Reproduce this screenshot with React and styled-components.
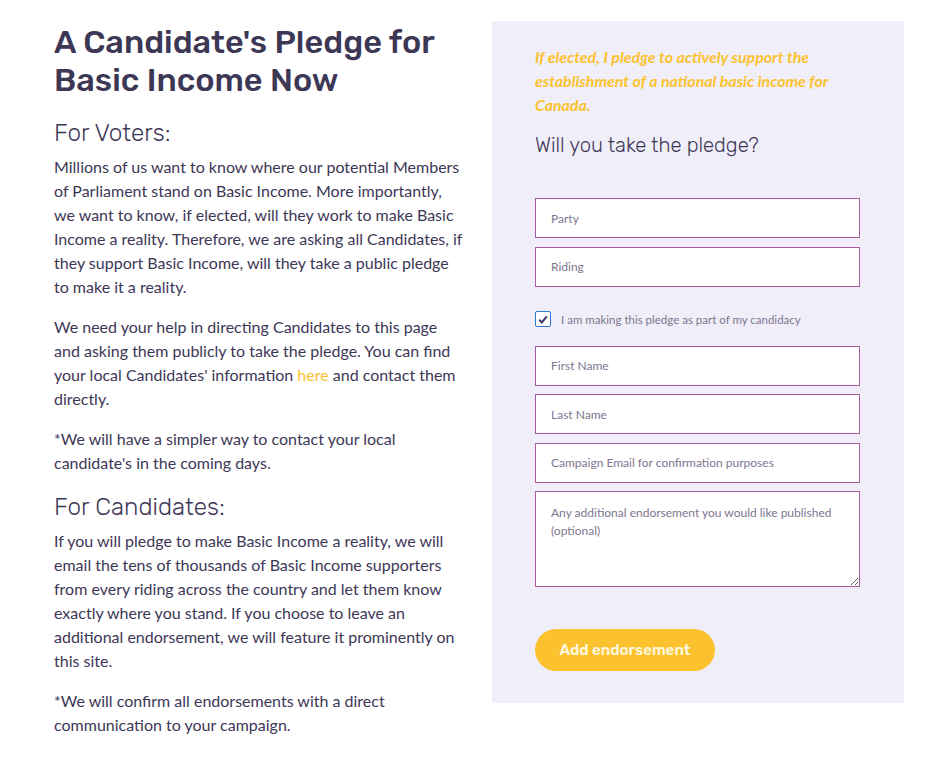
import React from 'react';
import styled, { createGlobalStyle } from 'styled-components';

const palette = {
  ink: '#3d3756',
  yellow: '#fcc22e',
  panel: '#f0eef9',
  border: '#a65ba3',
  hint: '#7d7690',
};

const Global = createGlobalStyle`
  html, body { margin: 0; padding: 0; background: #fff; }
  body { font-family: Lato, "Open Sans", sans-serif; color: ${palette.ink}; }
  * { box-sizing: border-box; }
`;

const Page = styled.div`
  display: flex;
  align-items: flex-start;
  gap: 27px;
  padding: 21px 40px 0 54px;
  width: 944px;
`;

const Story = styled.div`
  width: 411px;
  flex-shrink: 0;
`;

const Title = styled.h1`
  font-family: Rubik, Inter, "Noto Sans", sans-serif;
  font-weight: 500;
  font-size: 32.5px;
  line-height: 38px;
  margin: 2px 0 0;
`;

const SubHead = styled.h2`
  font-family: Rubik, Inter, "Noto Sans", sans-serif;
  font-weight: 300;
  font-size: 24.3px;
  line-height: 32px;
  margin: ${(p) => p.$top || 0}px 0 6px;
`;

const Para = styled.p`
  font-size: 16px;
  line-height: 24px;
  margin: 0 0 16px;
  a { color: ${palette.yellow}; text-decoration: none; }
`;

const Panel = styled.div`
  width: 412px;
  background: ${palette.panel};
  padding: 24px 43px 32px;
`;

const Pledge = styled.p`
  margin: 0;
  color: ${palette.yellow};
  font-weight: 700;
  font-style: italic;
  font-size: 15.9px;
  line-height: 24px;
`;

const Ask = styled.h3`
  font-family: Rubik, Inter, "Noto Sans", sans-serif;
  font-weight: 300;
  font-size: 20.3px;
  line-height: 28px;
  margin: 14px 0 39px;
`;

const Form = styled.form`
  display: flex;
  flex-direction: column;
  gap: 8.5px;
`;

const Field = styled.input`
  display: block;
  width: 325px;
  height: 40px;
  border: 1px solid ${palette.border};
  background: #fff;
  padding: 0 15px;
  font-family: Lato, sans-serif;
  font-size: 12px;
  color: ${palette.ink};
  outline: none;
  &::placeholder { color: ${palette.hint}; }
`;

const Area = styled.textarea`
  display: block;
  width: 325px;
  height: 96px;
  border: 1px solid ${palette.border};
  background: #fff;
  padding: 12px 15px;
  font-family: Lato, sans-serif;
  font-size: 12px;
  line-height: 18px;
  resize: vertical;
  outline: none;
  &::placeholder { color: ${palette.hint}; }
`;

const CheckRow = styled.label`
  display: flex;
  align-items: center;
  gap: 10px;
  margin: 16px 0 10px;
  font-size: 11.5px;
  color: ${palette.hint};
`;

const Box = styled.span`
  width: 16px;
  height: 16px;
  border: 1px solid #2b7bd6;
  border-radius: 2px;
  background: #fff;
  display: flex;
  align-items: center;
  justify-content: center;
`;

const Button = styled.button`
  margin-top: 33.5px;
  width: 180px;
  height: 42px;
  border: 0;
  border-radius: 21px;
  background: ${palette.yellow};
  color: #fff7dc;
  font-family: Rubik, Inter, "Noto Sans", sans-serif;
  font-weight: 600;
  font-size: 15px;
  cursor: pointer;
`;

export default function App() {
  return (
    <>
      <Global />
      <Page>
        <Story>
          <Title>A Candidate's Pledge for Basic Income Now</Title>
          <SubHead $top={18}>For Voters:</SubHead>
          <Para>
            Millions of us want to know where our potential Members of Parliament stand on
            Basic Income. More importantly, we want to know, if elected, will they work to make
            Basic Income a reality. Therefore, we are asking all Candidates, if they support
            Basic Income, will they take a public pledge to make it a reality.
          </Para>
          <Para>
            We need your help in directing Candidates to this page and asking them publicly to
            take the pledge. You can find your local Candidates' information <a href="#">here</a> and
            contact them directly.
          </Para>
          <Para>
            *We will have a simpler way to contact your local candidate's in the coming days.
          </Para>
          <SubHead>For Candidates:</SubHead>
          <Para>
            If you will pledge to make Basic Income a reality, we will email the tens of
            thousands of Basic Income supporters from every riding across the country and let
            them know exactly where you stand. If you choose to leave an additional endorsement,
            we will feature it prominently on this site.
          </Para>
          <Para>
            *We will confirm all endorsements with a direct communication to your campaign.
          </Para>
        </Story>
        <Panel>
          <Pledge>
            If elected, I pledge to actively support the establishment of a national basic
            income for Canada.
          </Pledge>
          <Ask>Will you take the pledge?</Ask>
          <Form onSubmit={(e) => e.preventDefault()}>
            <Field placeholder="Party" />
            <Field placeholder="Riding" />
            <CheckRow>
              <Box>
                <svg width="10" height="9" viewBox="0 0 10 9">
                  <path d="M1.2 4.8 L3.8 7.4 L8.8 1.4" fill="none" stroke="#3d3471" strokeWidth="2" />
                </svg>
              </Box>
              I am making this pledge as part of my candidacy
            </CheckRow>
            <Field placeholder="First Name" />
            <Field placeholder="Last Name" />
            <Field placeholder="Campaign Email for confirmation purposes" />
            <Area placeholder="Any additional endorsement you would like published (optional)" />
            <div>
              <Button type="submit">Add endorsement</Button>
            </div>
          </Form>
        </Panel>
      </Page>
    </>
  );
}
